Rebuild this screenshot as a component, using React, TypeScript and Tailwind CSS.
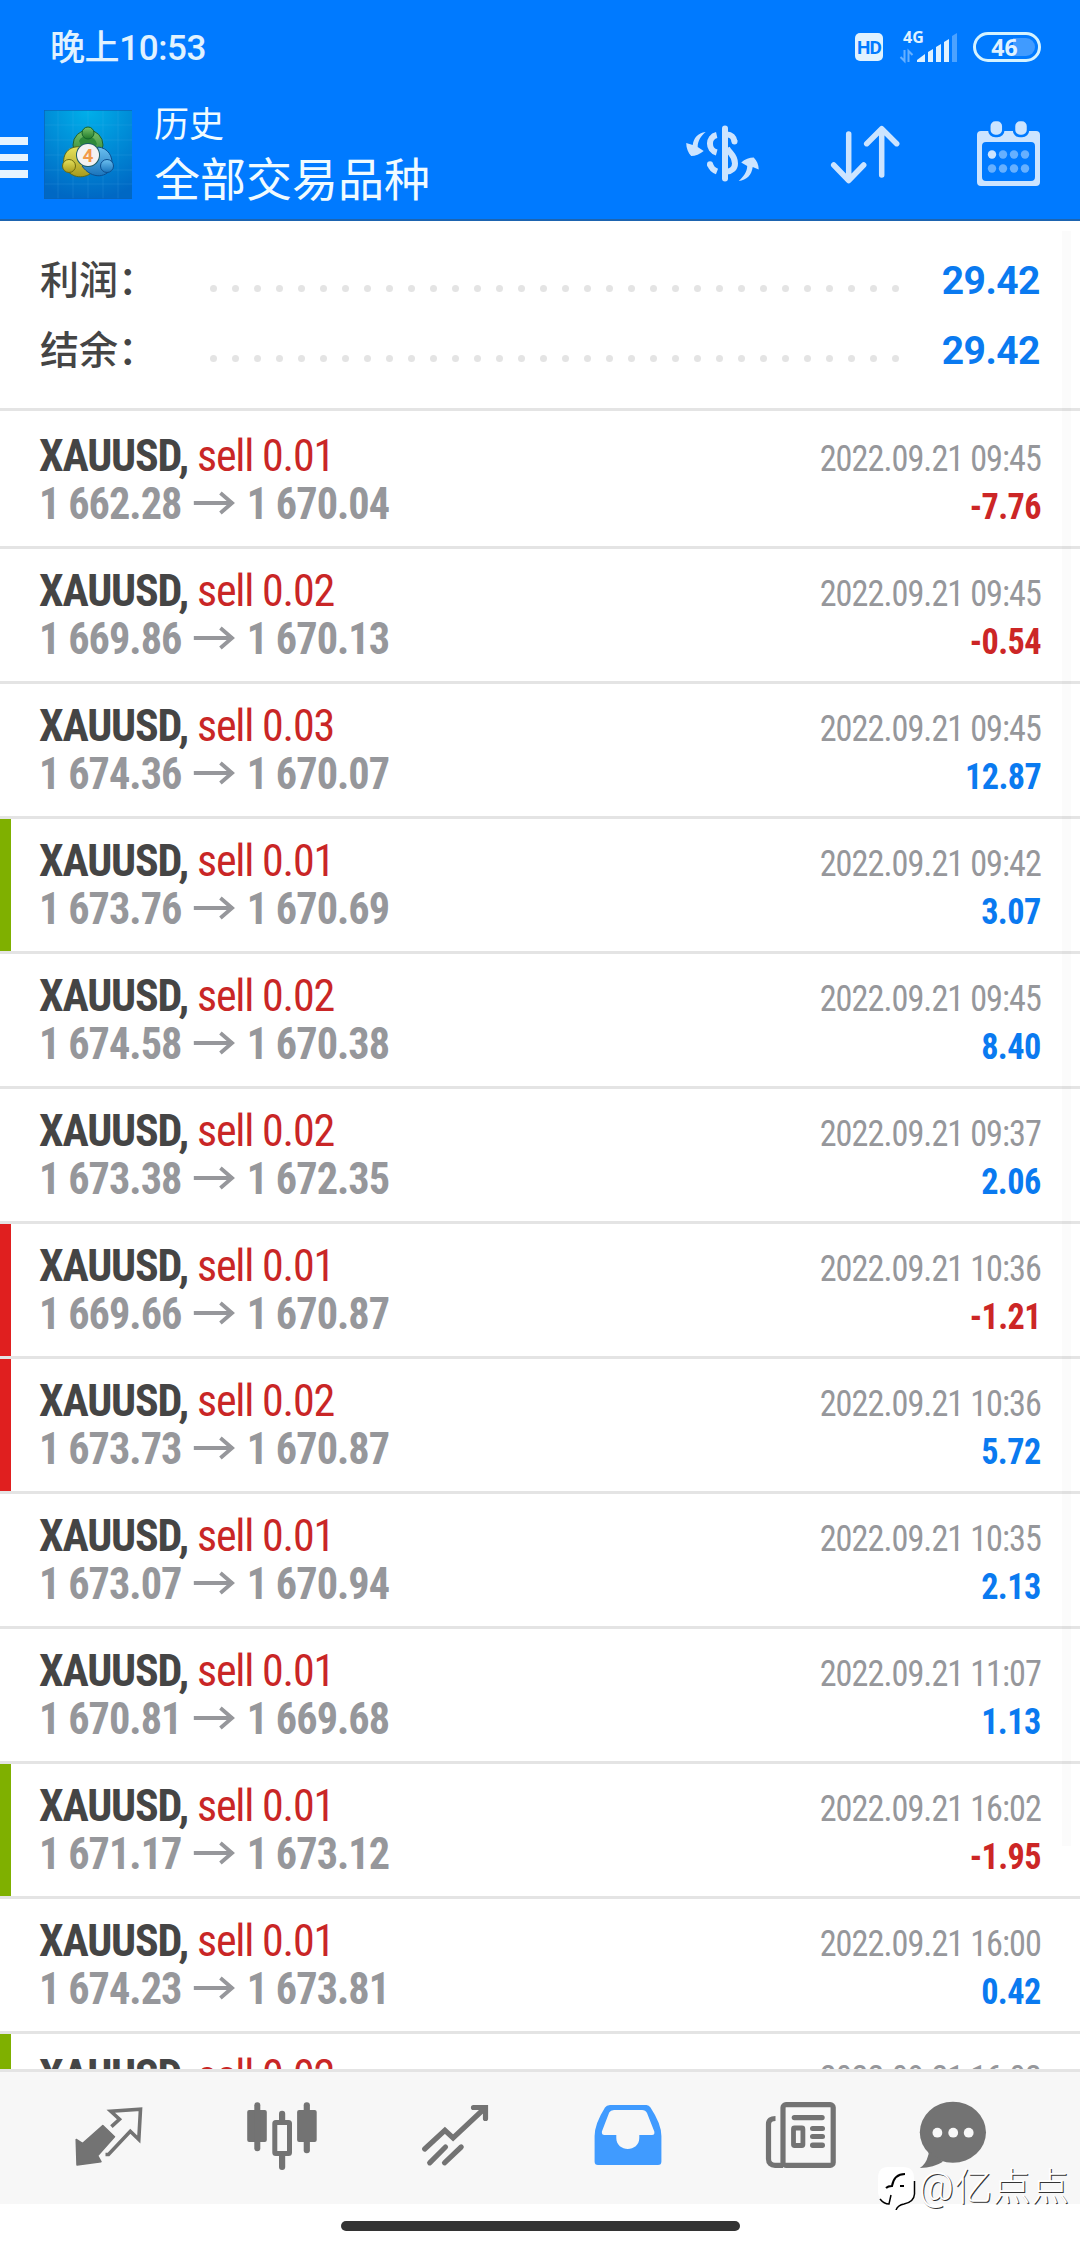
import { ReactNode } from 'react'

type Deal = {
  volume: string
  open: string
  close: string
  time: string
  profit: string
  mark?: 'green' | 'red'
}

const deals: Deal[] = [
  { volume: '0.01', open: '1 662.28', close: '1 670.04', time: '2022.09.21 09:45', profit: '-7.76' },
  { volume: '0.02', open: '1 669.86', close: '1 670.13', time: '2022.09.21 09:45', profit: '-0.54' },
  { volume: '0.03', open: '1 674.36', close: '1 670.07', time: '2022.09.21 09:45', profit: '12.87' },
  { volume: '0.01', open: '1 673.76', close: '1 670.69', time: '2022.09.21 09:42', profit: '3.07', mark: 'green' },
  { volume: '0.02', open: '1 674.58', close: '1 670.38', time: '2022.09.21 09:45', profit: '8.40' },
  { volume: '0.02', open: '1 673.38', close: '1 672.35', time: '2022.09.21 09:37', profit: '2.06' },
  { volume: '0.01', open: '1 669.66', close: '1 670.87', time: '2022.09.21 10:36', profit: '-1.21', mark: 'red' },
  { volume: '0.02', open: '1 673.73', close: '1 670.87', time: '2022.09.21 10:36', profit: '5.72', mark: 'red' },
  { volume: '0.01', open: '1 673.07', close: '1 670.94', time: '2022.09.21 10:35', profit: '2.13' },
  { volume: '0.01', open: '1 670.81', close: '1 669.68', time: '2022.09.21 11:07', profit: '1.13' },
  { volume: '0.01', open: '1 671.17', close: '1 673.12', time: '2022.09.21 16:02', profit: '-1.95', mark: 'green' },
  { volume: '0.01', open: '1 674.23', close: '1 673.81', time: '2022.09.21 16:00', profit: '0.42' },
  { volume: '0.02', open: '1 674.23', close: '1 673.81', time: '2022.09.21 16:02', profit: '0.84', mark: 'green' },
]

const markColors = {
  green: 'bg-[#7fb000]',
  red: 'bg-[#e01f1f]',
}

function StatusBar() {
  return (
    <div className="flex h-[96px] items-center justify-between pl-[50px] pr-[39px] text-[#e0f2ff]">
      <span className="pt-[2px] text-[35px] font-medium leading-[48px] tracking-[-0.4px]">晚上10:53</span>
      <div className="flex items-center pb-[2px]">
        <span className="mr-[17px] flex h-7 w-7 items-center justify-center rounded-[5px] bg-[#e0f2ff] text-[19px] font-bold leading-none tracking-[-1px] text-[#007aff]">
          HD
        </span>
        <svg className="mr-[15px] h-8 w-[58px] overflow-visible" viewBox="0 0 58 32">
          <text x="3" y="12" fontSize="16" fontWeight="700" fill="#e0f2ff" fontFamily="Open Sans">4G</text>
          <path d="M4.500 19v11l-4-4M8.500 31v-11l4 4" fill="none" stroke="#66b0ff" strokeWidth="2" />
          <path d="M17 31v-2l8-6v8zM28 31v-10l5-3v13zM36 31v-15l5-3v18zM44 31v-20l5-3v23z" fill="#e0f2ff" />
          <path d="M52 31v-26l5-3v29z" fill="#4ca2ff" />
        </svg>
        <span className="relative flex h-[30px] w-[68px] items-center justify-center rounded-full border-[3px] border-[#d5f3ff]">
          <span className="absolute right-[3px] h-[18px] w-[22px] rounded-r-full bg-[#409bff]"></span>
          <span className="relative mr-[5px] font-['Open_Sans'] text-[23px] font-bold leading-none">46</span>
        </span>
      </div>
    </div>
  )
}

function AppLogo() {
  return (
    <svg className="h-[89px] w-[88px]" viewBox="0 0 88 89">
      <defs>
        <radialGradient id="bg" cx="0.5" cy="0" r="1">
          <stop offset="0" stopColor="#00b0ea" />
          <stop offset="1" stopColor="#0068c4" />
        </radialGradient>
        <linearGradient id="g" x1="0" y1="0" x2="0" y2="1">
          <stop offset="0" stopColor="#7cc46c" />
          <stop offset="1" stopColor="#1f7a2a" />
        </linearGradient>
        <linearGradient id="y" x1="0" y1="0" x2="0" y2="1">
          <stop offset="0" stopColor="#e6e25c" />
          <stop offset="1" stopColor="#a89a1c" />
        </linearGradient>
        <linearGradient id="b" x1="0" y1="0" x2="0" y2="1">
          <stop offset="0" stopColor="#6cc0f0" />
          <stop offset="1" stopColor="#1a74bc" />
        </linearGradient>
      </defs>
      <path d="M0 0h88v89H0z" fill="url(#bg)" />
      <path d="M14 0v89M29 0v89M44 0v89M59 0v89M74 0v89M0 15h88M0 30h88M0 45h88M0 60h88M0 74h88" stroke="#5cc0f0" strokeOpacity="0.15" />
      <path d="M0 0.500h88M0.500 0v89M0 88.500h88" stroke="#0a62b8" strokeOpacity="0.7" />
      <circle cx="44" cy="35" r="15" fill="url(#g)" stroke="#1d6030" />
      <path d="M38 37C24 35 18 45 20 55C24 66 36 70 46 64L50 52Z" fill="url(#y)" stroke="#5b6a1c" />
      <path d="M54 37C64 38 69 46 68 56C64 68 48 70 38 56L48 52Z" fill="url(#b)" stroke="#0d4f90" />
      <path d="M35 31Q37 26 44 26Q51 27 53 34L50 38H38Z" fill="#2f8a3a" />
      <circle cx="44" cy="45" r="12" fill="#1c5c66" />
      <circle cx="44" cy="23" r="6" fill="url(#g)" stroke="#14632a" />
      <circle cx="25" cy="56" r="6.500" fill="url(#y)" stroke="#6b6a10" />
      <circle cx="63" cy="56" r="6.500" fill="url(#b)" stroke="#0d4f90" />
      <circle cx="44" cy="45" r="11" fill="#f4f2f2" />
      <text x="44" y="52" textAnchor="middle" fontSize="19" fontWeight="700" fill="#f29a4a" fontFamily="Roboto">4</text>
    </svg>
  )
}

function Header() {
  return (
    <header className="h-[221px] shrink-0 border-b-2 border-[#1d64b0] bg-[#007aff]">
      <StatusBar />
      <div className="flex h-[123px] items-start">
        <div className="mt-[41px] flex w-[28px] flex-col gap-[9px]">
          <span className="h-[7.500px] bg-[#e6f4ff]"></span>
          <span className="h-[7.500px] bg-[#e6f4ff]"></span>
          <span className="h-[7.500px] bg-[#e6f4ff]"></span>
        </div>
        <div className="ml-4 mt-[14px]">
          <AppLogo />
        </div>
        <div className="ml-[22px] grow text-[#f0fbff]">
          <div className="mt-[5px] text-[35px] leading-[50px]">历史</div>
          <div className="text-[46px] leading-[58px]">全部交易品种</div>
        </div>
        <svg className="mr-[69px] mt-[25px] h-[64px] w-[76px]" viewBox="0 0 76 64" fill="none" stroke="#cce4ff" strokeWidth="6">
          <path d="M41 7.500v50" strokeLinecap="round" />
          <path d="M32.700 14c-9 2-9 15 0 17.500M33 50.500c-4-1.500-6-4-7-7.500" />
          <path d="M26 43.500v-.2M50.500 20.500v-.1" strokeLinecap="round" />
          <path d="M43 13.500c4 0 7 3 7.500 7M43 27c3 6 8 7 8 15.500c0 5-4 8-8 8" />
          <path d="M21.700 11c-8 1-12 6-13 13l-6.500-2c0 5 2 10 5 13c4 0 9-2 12.500-5l-6-4c0-6 3-11 8-15z" fill="#cce4ff" stroke="none" />
          <path d="M54.700 60c8-1 13-6 14-14l6 2.500c0-5-2-9-5-12c-4 0-9 1.500-12.500 5l6 3.500c0 6-4 11-8.500 15z" fill="#cce4ff" stroke="none" />
        </svg>
        <svg className="mr-[74px] mt-[25px] h-[64px] w-[72px]" viewBox="0 0 72 64" fill="none" stroke="#cce4ff" strokeWidth="5.500" strokeLinecap="round" strokeLinejoin="round">
          <path d="M19.700 13v46M4.700 44l15 15.500l15-15.500M52.700 54v-46M37.700 22.700l15-15l15 15" />
        </svg>
        <svg className="mr-[37px] mt-[23px] h-[70px] w-[68px]" viewBox="0 0 68 70">
          <path fillRule="evenodd" d="M6 12h55a4 4 0 0 1 4 4v47a4 4 0 0 1-4 4H6a4 4 0 0 1-4-4V16a4 4 0 0 1 4-4zM11 23a4 4 0 0 0-4 4v31a4 4 0 0 0 4 4h45a4 4 0 0 0 4-4V27a4 4 0 0 0-4-4z" fill="#cce4ff" />
          <rect x="14.300" y="1" width="14" height="16" rx="6" fill="#cce4ff" stroke="#007aff" strokeWidth="2.500" />
          <rect x="39" y="1" width="14" height="16" rx="6" fill="#cce4ff" stroke="#007aff" strokeWidth="2.500" />
          {[17, 28, 39, 50].map((x) => (
            <g key={x} fill="#66b0ff">
              <circle cx={x} cy="35.500" r="4.200" fill={x === 17 ? '#cce4ff' : '#66b0ff'} />
              <circle cx={x} cy="49.500" r="4.200" />
            </g>
          ))}
        </svg>
      </div>
    </header>
  )
}

function SummaryRow({ label, value }: { label: string; value: string }) {
  return (
    <div className="flex h-[70px] items-center">
      <span className="w-[170px] text-[39px] font-medium leading-[70px] text-[#454545]">{label}</span>
      <div className="mt-[14px] flex w-[689px] justify-between">
        {Array.from({ length: 32 }, (_, i) => (
          <span key={i} className="h-[7px] w-[7px] rounded-full bg-[#e4e4e4]"></span>
        ))}
      </div>
      <span className="ml-auto mr-px text-[39px] font-bold tracking-[-0.5px] text-[#0a7af0]">{value}</span>
    </div>
  )
}

function DealRow({ deal }: { deal: Deal }) {
  const loss = deal.profit.startsWith('-')
  return (
    <div className="flex h-[135px] shrink-0 border-b-[3px] border-[#e4e4e4] font-['Roboto_Condensed','Roboto'] [font-stretch:75%]">
      <div className={`w-[11px] ${deal.mark ? markColors[deal.mark] : ''}`}></div>
      <div className="grow pl-[28px] pr-[39px] pt-[18px] leading-[48px]">
        <div className="flex h-12 items-baseline justify-between">
          <div className="text-[44px] tracking-[-1.2px]">
            <span className="font-bold text-[#454545]">XAUUSD,</span>{' '}
            <span className="text-[#c92626]">sell {deal.volume}</span>
          </div>
          <div className="origin-right scale-x-95 text-[36px] tracking-[-1px] text-[#96979b]">{deal.time}</div>
        </div>
        <div className="flex h-12 items-baseline justify-between">
          <div className="flex origin-left scale-x-96 text-[44px] font-bold tracking-[-1px] text-[#96979b]">
            <span>{deal.open}</span>
            <svg className="ml-[13px] mr-[11px] mt-[11px] h-[24px] w-[44px]" viewBox="0 0 44 24" fill="none" stroke="#96979b" strokeWidth="4">
              <path d="M0 12h41M28 2l12 10l-12 10" />
            </svg>
            <span>{deal.close}</span>
          </div>
          <div className={`origin-right scale-x-95 text-[36px] font-bold tracking-[-0.6px] ${loss ? 'text-[#cc2626]' : 'text-[#0a7af0]'}`}>{deal.profit}</div>
        </div>
      </div>
    </div>
  )
}

function NavIcon({ children }: { children: ReactNode }) {
  return (
    <div className="flex w-[173px] justify-center pt-[28px]">
      <svg className="h-[72px] w-[72px]" viewBox="0 0 72 72" fill="#737373" stroke="none">
        {children}
      </svg>
    </div>
  )
}

function BottomNav() {
  return (
    <nav className="relative flex h-[135px] shrink-0 border-t-[3px] border-[#e4e4e4] bg-[#f7f7f7] pl-[22px]">
      <NavIcon>
        <path d="M29.800 25.500L41.500 36.700L24.600 55.700L28 61.700L4 65L3.200 39.500L9.500 43.500Z" stroke="#737373" strokeWidth="1.500" strokeLinejoin="round" />
        <path d="M38.400 26.700L46.500 19.300L37.800 11.200L67.500 9.200L65.800 39.500L57.300 31.200L35.500 54.500H32.500" fill="none" stroke="#737373" strokeWidth="3.600" />
      </NavIcon>
      <NavIcon>
        <rect x="1.200" y="10" width="19.600" height="32" rx="2" />
        <rect x="8.300" y="2.300" width="6" height="49" rx="3" />
        <rect x="28.800" y="22.500" width="14.700" height="31" rx="1" fill="none" stroke="#737373" strokeWidth="5" />
        <rect x="33" y="10.700" width="6.200" height="12" rx="3" />
        <rect x="33" y="53" width="6.200" height="17" rx="3" />
        <rect x="51.100" y="10" width="19.600" height="32" rx="2" />
        <rect x="57.700" y="2.300" width="6.200" height="51" rx="3" />
      </NavIcon>
      <NavIcon>
        <path
          d="M5.700 49L25.900 30.300L34.100 38L66 8M54.500 7.500H66.500V18.500M10.700 62.800L26.500 47M25.500 62.800L42.200 47"
          fill="none"
          stroke="#737373"
          strokeWidth="5.200"
          strokeLinecap="round"
        />
      </NavIcon>
      <NavIcon>
        <path
          d="M18 5H54.500Q57 5 58.500 7.500Q69.400 24 69.400 36V61.500Q69.400 65 66 65H6Q2.600 65 2.600 61.500V36Q2.600 24 13 7.500Q14.500 5 18 5ZM22 10Q18.500 10 17.200 12.500L9.900 31.500Q9.500 35 12.500 35H24.300V38C24.300 45 30 49 35.800 49S47.300 45 47.300 38V35H60Q63 35 62.300 31.500L55 13Q53.500 10 50 10Z"
          fill="#409bff"
          fillRule="evenodd"
        />
      </NavIcon>
      <NavIcon>
        <g fill="none" stroke="#737373" strokeWidth="5.200">
          <rect x="18" y="4.600" width="50.200" height="60.800" rx="3" />
          <path d="M10.500 18.500C6 18.500 3.500 20 3.500 24V59C3.500 63 6 65.400 10 65.400H18" />
        </g>
        <rect x="26.700" y="15" width="33" height="5.200" rx="2.600" />
        <rect x="28.500" y="28" width="9.400" height="17.500" rx="1" fill="none" stroke="#737373" strokeWidth="4.800" />
        <rect x="45" y="26" width="15" height="5" rx="2.500" />
        <rect x="45" y="34" width="15" height="5" rx="2.500" />
        <rect x="45" y="42.500" width="15" height="5.500" rx="2.700" />
      </NavIcon>
      <div className="flex w-[132px] justify-center pt-[28px]">
        <svg className="h-[72px] w-[72px]" viewBox="0 0 72 72" fill="#737373">
          <ellipse cx="35.900" cy="32.300" rx="33.100" ry="30.500" />
          <path d="M9 49Q13 52 11 56Q9 64 2.800 68Q17 67.500 25.900 61.700Z" />
          <circle cx="20.400" cy="32.700" r="4.900" fill="#f7f7f7" />
          <circle cx="36.200" cy="32.700" r="4.900" fill="#f7f7f7" />
          <circle cx="51.700" cy="32.700" r="4.900" fill="#f7f7f7" />
        </svg>
      </div>
      {/* author stamp */}
      <div className="absolute left-[877px] top-[91px] flex items-center text-white">
        <svg className="h-[46px] w-[40px]" viewBox="0 0 40 46">
          <path d="M11 3H26Q37 3 37 14V29Q37 38 27 40L19 46V41Q2 38 1 29V14Q1 3 11 3Z" fill="#fff" />
          <path d="M9 24Q11 22 15 22Q17 10 28 10M23 22H27" fill="none" stroke="#000" strokeWidth="2" />
          <path d="M3 35Q7 40 12 40L14 31M37.500 17V30Q37 38 27 40Q21 41 19 46" fill="none" stroke="#000" strokeWidth="1.500" />
        </svg>
        <span className="ml-[2px] whitespace-nowrap text-[38px] font-light leading-[48px] tracking-[0.5px] [text-shadow:1px_1px_0_#333]">@亿点点</span>
      </div>
    </nav>
  )
}

export default function App() {
  return (
    <div className="relative flex h-[2248px] w-[1080px] flex-col overflow-hidden bg-white font-['Roboto','Noto_Sans_CJK_SC',sans-serif]">
      <Header />
      <section className="h-[190px] shrink-0 border-b-[3px] border-[#e4e4e4] pl-[40px] pr-[39px] pt-[25px]">
        <SummaryRow label="利润：" value="29.42" />
        <SummaryRow label="结余：" value="29.42" />
      </section>
      <section className="flex h-[1658px] shrink-0 flex-col overflow-hidden pt-[3px]">
        {deals.map((deal, i) => (
          <DealRow key={i} deal={deal} />
        ))}
      </section>
      <BottomNav />
      <div className="flex grow justify-center pt-[17px]">
        <div className="h-[10px] w-[399px] rounded-full bg-[#333333]"></div>
      </div>
      {/* scrollbar track */}
      <div className="absolute right-[9px] top-[231px] h-[1615px] w-[9px] bg-black/[0.015]"></div>
    </div>
  )
}
